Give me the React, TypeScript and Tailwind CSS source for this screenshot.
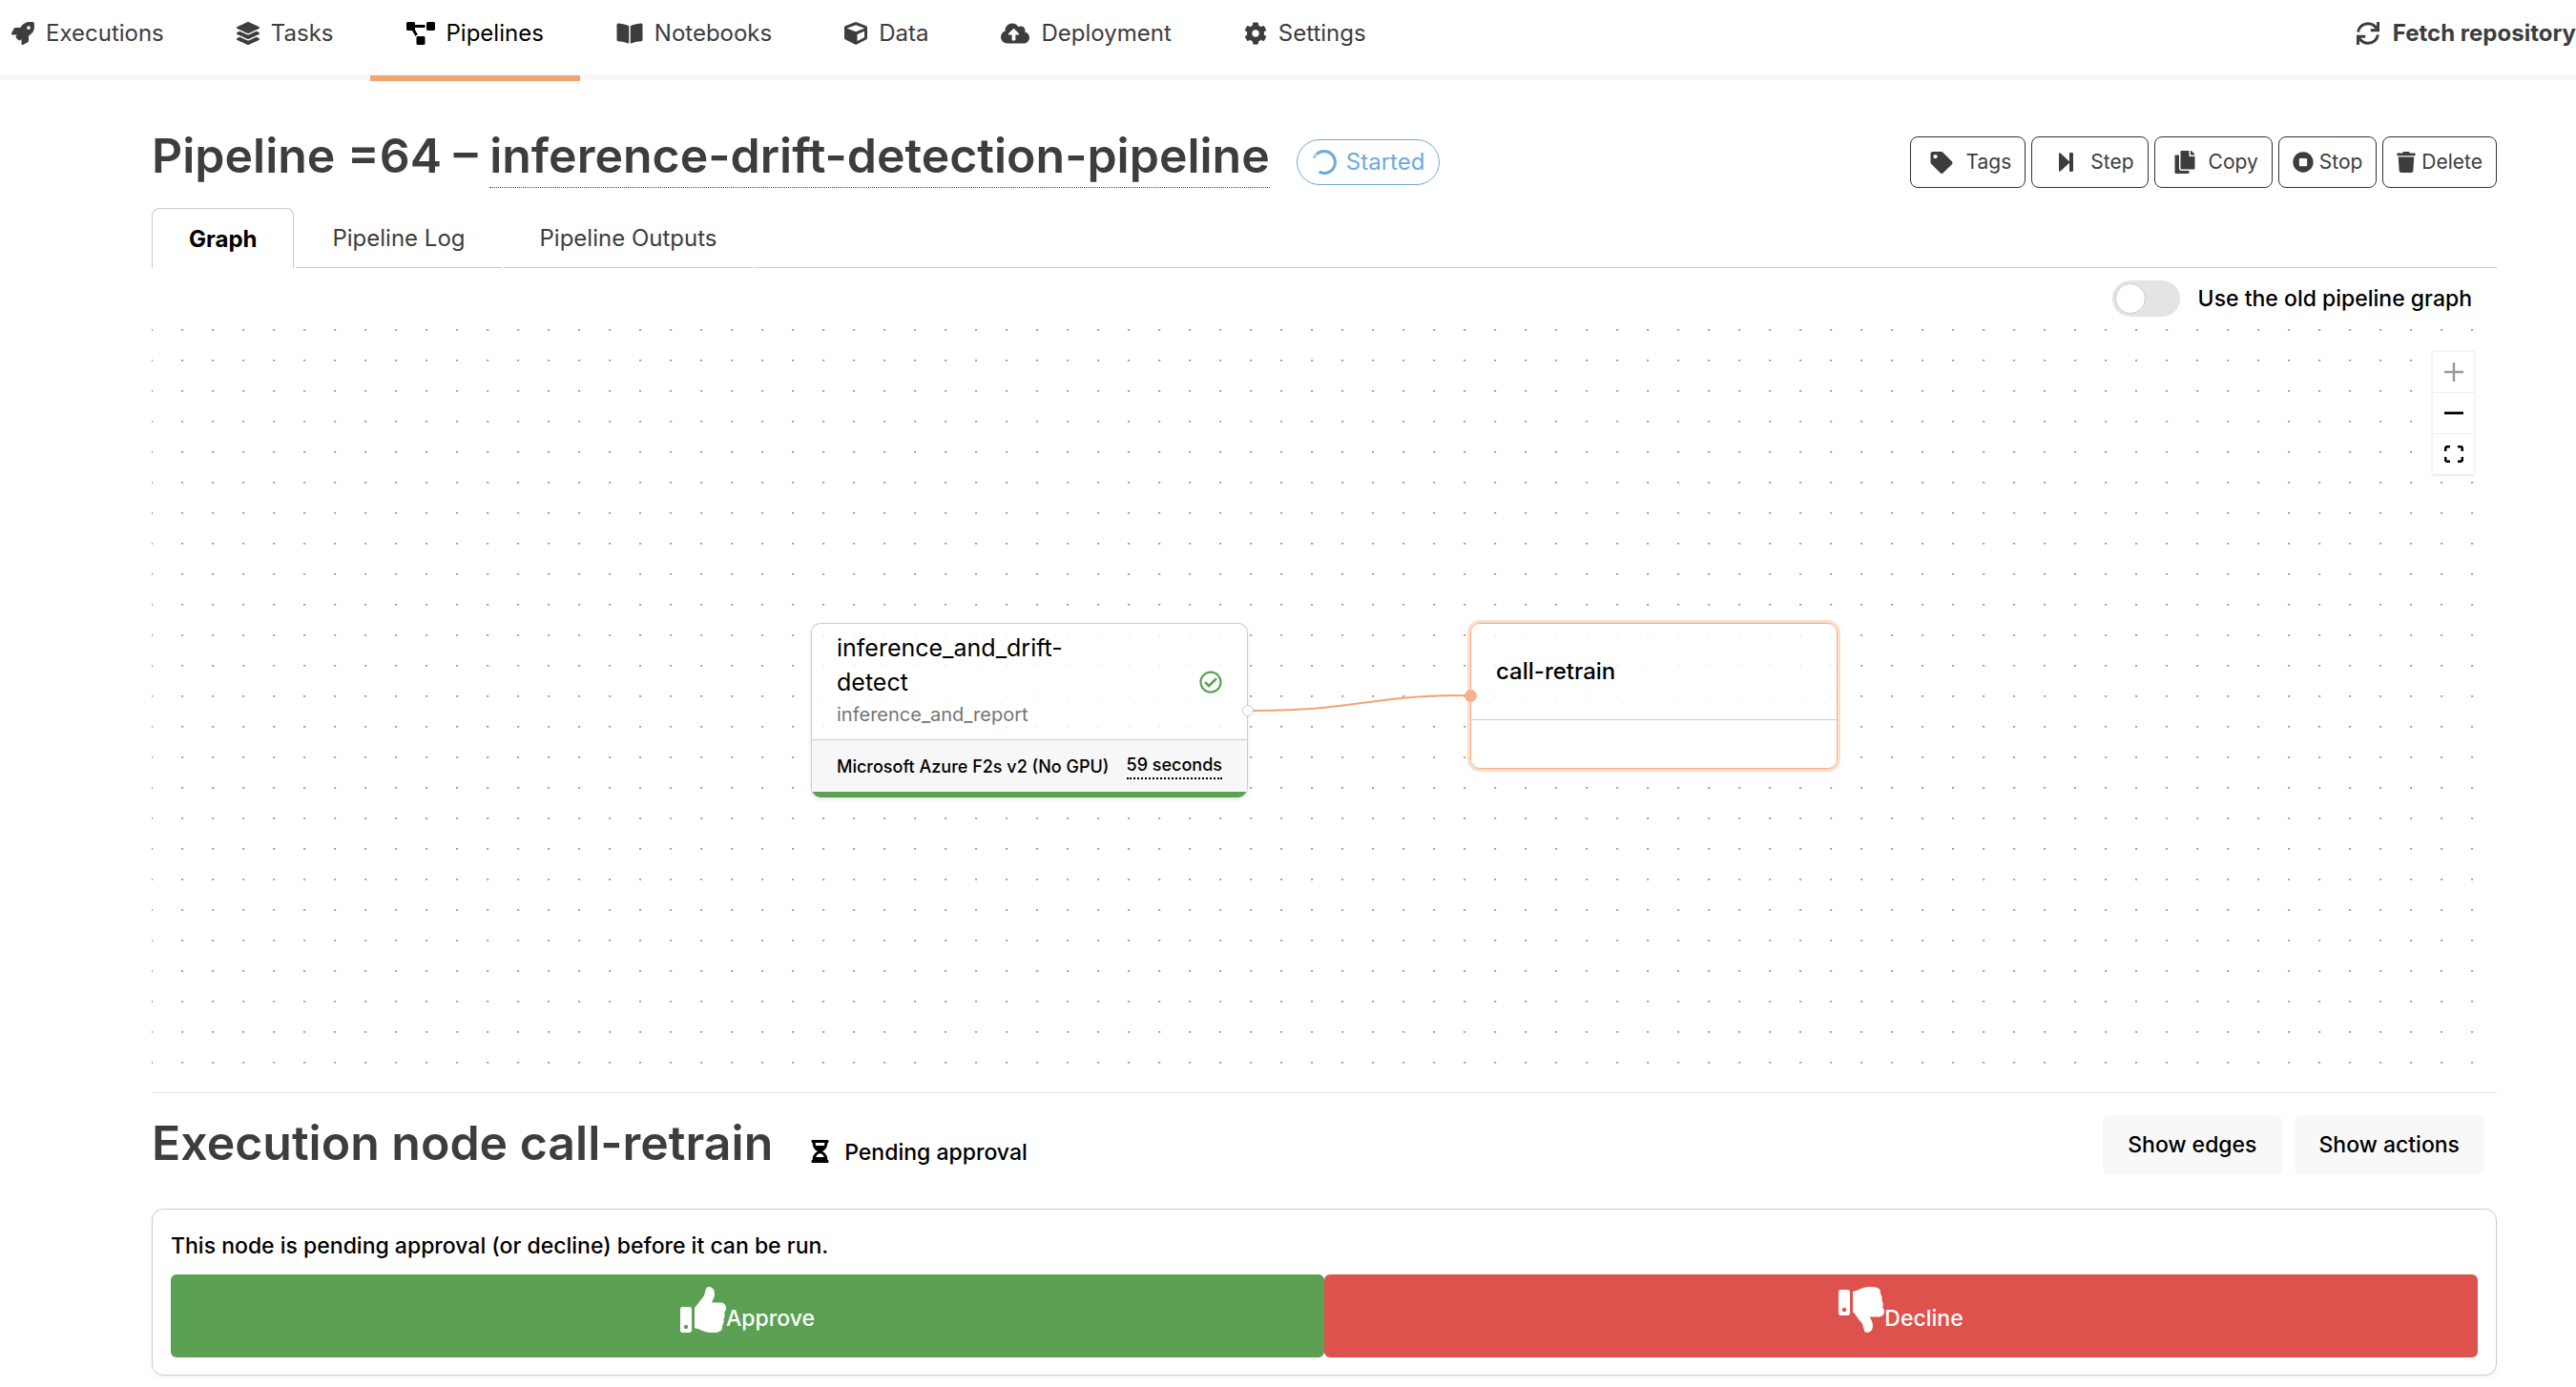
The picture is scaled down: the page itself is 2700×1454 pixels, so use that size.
import type { ReactNode } from "react";
import type { IconType } from "react-icons";
import {
  FaBookOpen,
  FaCloudUploadAlt,
  FaCog,
  FaCopy,
  FaCube,
  FaHourglassHalf,
  FaLayerGroup,
  FaProjectDiagram,
  FaRegCheckCircle,
  FaRocket,
  FaStopCircle,
  FaTag,
  FaThumbsDown,
  FaThumbsUp,
  FaTrash,
} from "react-icons/fa";

const navItems: { label: string; Icon: IconType; width: string; active?: boolean }[] = [
  { label: "Executions", Icon: FaRocket, width: "w-6" },
  { label: "Tasks", Icon: FaLayerGroup, width: "w-6" },
  { label: "Pipelines", Icon: FaProjectDiagram, width: "w-[30px]", active: true },
  { label: "Notebooks", Icon: FaBookOpen, width: "w-7" },
  { label: "Data", Icon: FaCube, width: "w-6" },
  { label: "Deployment", Icon: FaCloudUploadAlt, width: "w-[30px]" },
  { label: "Settings", Icon: FaCog, width: "w-6" },
];

function SyncIcon() {
  return (
    <svg viewBox="0 0 24 24" className="size-6 shrink-0" fill="none" stroke="currentColor" strokeWidth="3" aria-hidden="true">
      <path d="M1.6 10.4C2.4 5.2 6.700 1.700 12 1.700c3.900 0 7.200 2 9.400 5.400" />
      <path d="M22.600 0v8.900M24 8.800h-9.200" />
      <path d="M22.400 13.600c-.8 5.200-5.100 8.700-10.400 8.700-3.900 0-7.200-2-9.400-5.400" />
      <path d="M1.400 24v-8.900M0 15.200h9.200" />
    </svg>
  );
}

function StepIcon() {
  return (
    <svg viewBox="0 0 15 20" className="h-5 w-[15px]" fill="currentColor" aria-hidden="true">
      <path d="M0 1.200C0 .2 1 0 1.600.6L11 9.200V1.200C11 .5 11.500 0 12.200 0h1.400C14.500 0 15 .5 15 1.200v17.600c0 .7-.5 1.200-1.400 1.200h-1.400c-.7 0-1.200-.5-1.200-1.200v-8L1.600 19.400C1 20 0 19.800 0 18.800z" />
    </svg>
  );
}

function Spinner() {
  return (
    <svg viewBox="0 0 26 26" className="size-[26px]" fill="none" stroke="currentColor" strokeWidth="3" aria-hidden="true">
      <path d="M2 8.900A11.500 11.500 0 0 1 5.500 4.300" strokeOpacity="0.6" />
      <path d="M5.300 4.400A11.500 11.500 0 1 1 7.600 23.200" />
    </svg>
  );
}

function ToolButton({ icon, children, wide }: { icon: ReactNode; children: string; wide?: boolean }) {
  return (
    <button
      type="button"
      className={
        wide
          ? "flex h-[54px] items-center gap-3.5 rounded-lg border border-[#333] bg-white pl-5 pr-3.5"
          : "flex h-[54px] items-center gap-1.5 rounded-lg border border-[#333] bg-white px-3.5"
      }
    >
      {icon}
      <span>{children}</span>
    </button>
  );
}

function TopNav() {
  return (
    <header className="flex h-[84px] justify-between border-b-[6px] border-[#f8f8f8] text-2xl text-[#3d3d3d]">
      <nav className="-ml-[26px] flex">
        {navItems.map(({ label, Icon, width, active }) => (
          <a
            key={label}
            href="#"
            className={
              active
                ? "flex h-[85px] items-center gap-3 border-b-[6px] border-[#f3a271] px-[38px] pb-2.5 text-black"
                : "flex h-[85px] items-center gap-3 border-b-[6px] border-transparent px-[38px] pb-2.5"
            }
          >
            <Icon className={`h-6 ${width}`} />
            {label}
          </a>
        ))}
      </nav>
      <button type="button" className="flex h-[69px] items-center gap-3.5 whitespace-nowrap font-bold">
        <SyncIcon />
        Fetch repository
      </button>
    </header>
  );
}

function TitleRow() {
  return (
    <div className="flex items-end justify-between pt-[55px]">
      <div className="flex items-end gap-7">
        <h1 className="text-[50px] font-semibold leading-12 text-[#3d3d3d]">
          Pipeline =64 –{" "}
          <span className="inline-block border-b border-dotted border-[#444] pb-[9px]">
            inference-drift-detection-pipeline
          </span>
        </h1>
        <span className="mb-[3px] flex h-12 items-center gap-2.5 rounded-full border border-[#6cacdb] px-[15px] text-2xl text-[#6cacdb]">
          <Spinner />
          Started
        </span>
      </div>
      <div className="flex gap-1.5 text-[21px] text-[#3d3d3d]">
        <ToolButton wide icon={<FaTag className="h-[23px] w-6" />}>Tags</ToolButton>
        <ToolButton wide icon={<span className="pl-2 pr-1"><StepIcon /></span>}>Step</ToolButton>
        <ToolButton wide icon={<FaCopy className="h-6 w-[22px]" />}>Copy</ToolButton>
        <ToolButton icon={<FaStopCircle className="size-[22px]" />}>Stop</ToolButton>
        <ToolButton icon={<FaTrash className="h-[22px] w-5" />}>Delete</ToolButton>
      </div>
    </div>
  );
}

function Tabs() {
  return (
    <div role="tablist" className="mt-[21px] flex h-[63px] gap-0.5 text-2xl text-[#3d3d3d]">
      <button type="button" role="tab" aria-selected="true" className="rounded-t-lg border border-b-0 border-[#ccc] px-[38px] pt-0.5 font-bold text-black">
        Graph
      </button>
      <button type="button" role="tab" aria-selected="false" className="border-b border-[#ccc] px-[38px] pt-0.5">
        Pipeline Log
      </button>
      <button type="button" role="tab" aria-selected="false" className="border-b border-[#ccc] px-[38px] pt-0.5">
        Pipeline Outputs
      </button>
      <div className="flex-1 border-b border-[#ccc]" />
    </div>
  );
}

function ZoomControls() {
  const button = "flex h-[43px] w-full items-center justify-center border-b border-[#eee] bg-white";
  return (
    <div className="absolute right-6 top-[35px] w-[43px] shadow-[0_0_2px_1px_rgba(0,0,0,0.08)]">
      <button type="button" aria-label="Zoom in" disabled className={button}>
        <svg viewBox="0 0 20 20" className="size-5" stroke="#9a9a9a" strokeWidth="2.500" aria-hidden="true">
          <path d="M10 0v20M0 10h20" />
        </svg>
      </button>
      <button type="button" aria-label="Zoom out" className={button}>
        <svg viewBox="0 0 20 20" className="size-5" stroke="#000" strokeWidth="2.800" aria-hidden="true">
          <path d="M0 10h20" />
        </svg>
      </button>
      <button type="button" aria-label="Fit view" className={button}>
        <svg viewBox="0 0 20 18" className="h-[18px] w-5" fill="none" stroke="#000" strokeWidth="2.500" aria-hidden="true">
          <path d="M1.200 6V3.200c0-1.200.8-2 2-2H6M14 1.200h2.800c1.200 0 2 .8 2 2V6M18.800 12v2.800c0 1.200-.8 2-2 2H14M6 16.800H3.200c-1.200 0-2-.8-2-2V12" />
        </svg>
      </button>
    </div>
  );
}

function Graph() {
  return (
    <div className="relative mt-0.5 h-[811px] overflow-hidden">
      <svg className="absolute inset-0 size-full" aria-hidden="true">
        <defs>
          <pattern id="dots" x="-1" y="11" width="32" height="32" patternUnits="userSpaceOnUse">
            <rect width="2" height="1" fill="#999" />
            <rect y="1" width="2" height="1" fill="#bbb" />
            <rect x="2" width="1" height="2" fill="#eee" />
          </pattern>
        </defs>
        <rect width="100%" height="100%" fill="url(#dots)" />
        <path d="M1155 411C1268 411 1268 395 1382 395" fill="none" stroke="#f3a271" strokeWidth="2" />
      </svg>

      <div className="absolute left-[691px] top-[319px] w-[458px]">
        <div className="overflow-hidden rounded-[10px] border border-b-0 border-[#ccc] bg-white/85 shadow-[0_2px_4px_rgba(0,0,0,0.1)]">
          <div className="flex h-[121px] items-center justify-between px-[26px]">
            <div>
              <div className="w-[260px] text-[25px] leading-9 text-black">inference_and_drift-detect</div>
              <div className="pb-1 text-[20px] leading-8 text-[#757575]">inference_and_report</div>
            </div>
            <FaRegCheckCircle className="size-6 text-[#5ca053]" />
          </div>
          <div className="flex h-[61px] items-center justify-between border-t border-b-[6px] border-t-[#ccc] border-b-[#5ca053] bg-[#f7f7f7] px-[26px] text-[18px] font-medium text-black">
            <span>Microsoft Azure F2s v2 (No GPU)</span>
            <span className="border-b-2 border-dotted border-black leading-[26px]">59 seconds</span>
          </div>
        </div>
        <span className="absolute -right-1.5 top-[86px] size-3 rounded-full border border-[#ccc] bg-white" />
      </div>

      <div className="absolute left-[1382px] top-[319px] h-[153px] w-[385px] rounded-[10px] border border-[#f3ae87] bg-white/85 ring-3 ring-[#fadfcf]">
        <div className="flex h-[101px] items-center border-b border-[#ccc] px-[26px] text-2xl font-medium text-black">
          call-retrain
        </div>
        <div className="h-[50px] rounded-b-[10px] bg-white" />
        <span className="absolute -left-[7px] top-[69px] size-[13px] rounded-full bg-[#f4b28a]" />
      </div>

      <ZoomControls />
    </div>
  );
}

function ExecutionNode() {
  return (
    <section className="border-t border-[#e5e5e5] pt-[23px]">
      <div className="flex h-[62px] justify-between">
        <div className="flex items-baseline gap-10">
          <h2 className="text-[50px] font-semibold leading-[58px] text-[#3d3d3d]">Execution node call-retrain</h2>
          <p className="text-[23px] font-medium text-black">
            <FaHourglassHalf className="mr-4 inline-block h-6 w-[19px] align-[-3px]" />
            Pending approval
          </p>
        </div>
        <div className="flex gap-[13px] pr-[13px] text-[23px] font-medium text-black">
          <button type="button" className="rounded-md bg-[#f8f8f8] px-[26px]">Show edges</button>
          <button type="button" className="rounded-md bg-[#f8f8f8] px-[26px]">Show actions</button>
        </div>
      </div>

      <div className="mt-9 rounded-xl border border-[#ccc] px-[19px] pb-[18px] pt-5 shadow-[0_2px_4px_rgba(0,0,0,0.05)]">
        <p className="text-[23px] font-medium leading-9 text-black">
          This node is pending approval (or decline) before it can be run.
        </p>
        <div className="mt-3 grid grid-cols-2 text-[23px] font-medium text-white">
          <button type="button" className="flex h-[87px] items-center justify-center rounded-md bg-[#5ca053]">
            <FaThumbsUp className="mb-[13px] size-12" />
            <span className="pt-1.5">Approve</span>
          </button>
          <button type="button" className="flex h-[87px] items-center justify-center rounded-md bg-[#dd524c]">
            <FaThumbsDown className="mb-[13px] size-12" />
            <span className="pt-1.5">Decline</span>
          </button>
        </div>
      </div>
    </section>
  );
}

export default function App() {
  return (
    <div className="min-h-screen bg-white font-['Inter','Liberation_Sans',sans-serif]">
      <TopNav />
      <main className="pl-[159px] pr-[83px]">
        <TitleRow />
        <Tabs />
        <label className="flex items-center justify-end gap-[19px] pr-[26px] pt-[13px] text-[23px] font-medium text-black">
          <input
            type="checkbox"
            role="switch"
            className="relative h-[38px] w-[71px] appearance-none rounded-full bg-[#e4e4e4] before:absolute before:left-[3px] before:top-[3px] before:size-8 before:rounded-full before:border before:border-[#ccc] before:bg-white"
          />
          Use the old pipeline graph
        </label>
        <Graph />
        <ExecutionNode />
      </main>
    </div>
  );
}
